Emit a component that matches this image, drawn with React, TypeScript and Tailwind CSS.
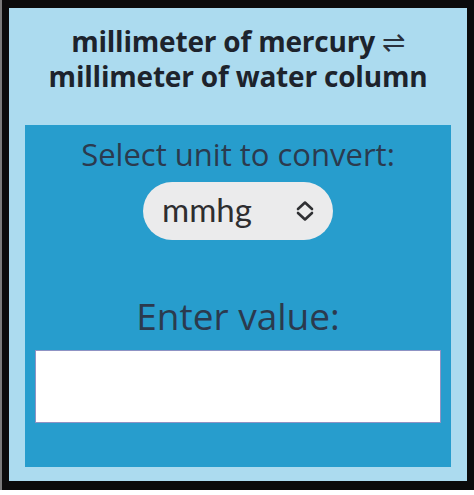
import React from "react";

export default function App() {
  return (
    <div className="w-[474px] h-[495px] bg-white">
      <div className="flex h-[490px] w-[474px] bg-[#7a7a7a] pl-[2px]">
        <div className="flex-1 border-l-[7px] border-r-[7px] border-t-[8px] border-b-[9px] border-[#0b0b0b] bg-[#acdbef] px-[16px] pt-[16px] pb-[14px] flex flex-col">
          <h1
            className="text-center text-[28px] leading-[35px] font-bold text-[#1d232c] tracking-[-0.2px]"
            style={{ fontFamily: '"Open Sans", sans-serif' }}
          >
            <div>
              millimeter of mercury <span className="font-normal text-[#2a313c]">⇌</span>
            </div>
            <div>millimeter of water column</div>
          </h1>
          <div className="mt-[31px] flex-1 bg-[#279dcd] flex flex-col items-center pt-[9px] px-[10px]">
            <div
              className="text-[31px] leading-[40px] text-[#2b3a4e]"
              style={{ fontFamily: '"Open Sans", sans-serif' }}
            >
              Select unit to convert:
            </div>
            <div className="mt-[8px] flex h-[58px] w-[190px] items-center justify-between rounded-full bg-[#ebebec] pl-[19px] pr-[18px]">
              <span
                className="text-[33px] leading-none text-[#2e2e30] -mt-[4px]"
                style={{ fontFamily: "Lato, sans-serif" }}
              >
                mmhg
              </span>
              <svg width="20" height="22" viewBox="0 0 20 22" fill="none">
                <polyline points="3,9 10,2.5 17,9" stroke="#2f3033" strokeWidth="2.6" strokeLinecap="round" strokeLinejoin="round" />
                <polyline points="3,13 10,19.5 17,13" stroke="#2f3033" strokeWidth="2.6" strokeLinecap="round" strokeLinejoin="round" />
              </svg>
            </div>
            <div
              className="mt-[51px] text-[37px] leading-[49px] text-[#2b3a4e]"
              style={{ fontFamily: '"Open Sans", sans-serif' }}
            >
              Enter value:
            </div>
            <input
              type="text"
              className="mt-[10px] h-[73px] w-full border border-[#8f93c4] bg-white outline-none"
            />
          </div>
        </div>
      </div>
    </div>
  );
}
